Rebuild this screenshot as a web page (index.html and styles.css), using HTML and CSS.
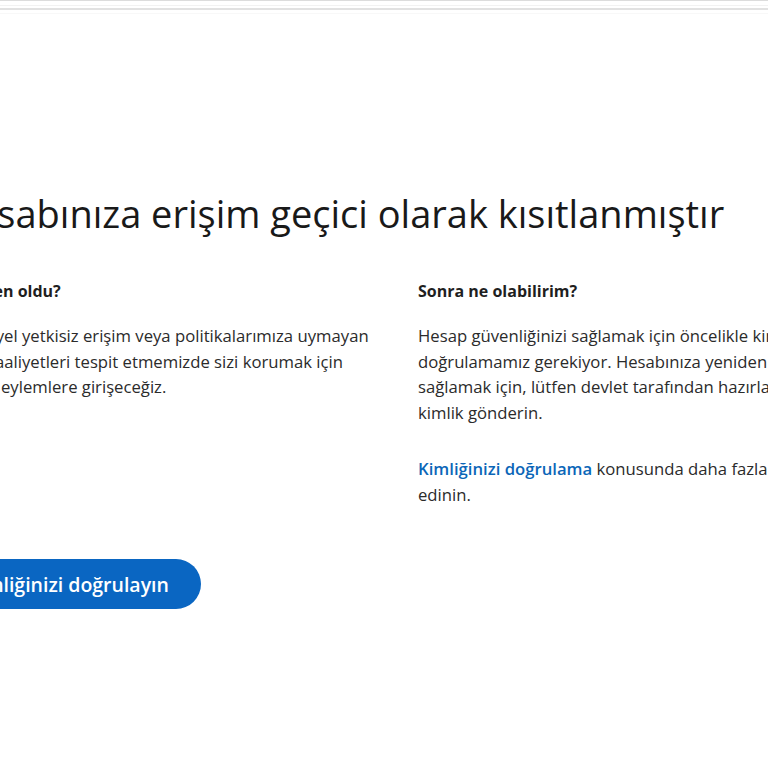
FILE: index.html
```html
<!DOCTYPE html>
<html lang="tr">
<head>
<meta charset="utf-8">
<title>Hesabınıza erişim geçici olarak kısıtlanmıştır</title>
<link rel="stylesheet" href="styles.css">
</head>
<body>
<div class="topbar">
  <div class="rule rule-a"></div>
  <div class="rule rule-b"></div>
  <div class="rule rule-c"></div>
  <div class="rule rule-d"></div>
</div>
<main class="page">
  <h1 class="title">Hesabınıza erişim geçici olarak kısıtlanmıştır</h1>
  <div class="cols">
    <section class="col">
      <h2 class="subhead">Bu neden oldu?</h2>
      <p class="text">Potansiyel yetkisiz erişim veya politikalarımıza uymayan<br>hesap faaliyetleri tespit etmemizde sizi korumak için<br>önleyici eylemlere girişeceğiz.</p>
    </section>
    <section class="col">
      <h2 class="subhead">Sonra ne olabilirim?</h2>
      <p class="text">Hesap güvenliğinizi sağlamak için öncelikle kimliğinizi<br>doğrulamamız gerekiyor. Hesabınıza yeniden erişim<br>sağlamak için, lütfen devlet tarafından hazırlanmış bir<br>kimlik gönderin.</p>
      <p class="text text-more"><a class="link" href="#">Kimliğinizi doğrulama</a> konusunda daha fazla bilgi<br>edinin.</p>
    </section>
  </div>
  <button class="btn" type="button">Kimliğinizi doğrulayın</button>
</main>
</body>
</html>
```

FILE: styles.css
```css
html, body {
  margin: 0;
  padding: 0;
  background: #ffffff;
  overflow: hidden;
}

body {
  font-family: "Open Sans", "Noto Sans", sans-serif;
  color: #1f1f1f;
}

.topbar {
  display: flex;
  flex-direction: column;
  height: 15px;
}

.rule {
  height: 1px;
  background: #dddddd;
}

.rule-a { background: #dcdcdc; }
.rule-b { margin-top: 4px; background: #f2f2f2; }
.rule-c { margin-top: 2px; height: 2px; background: #e1e1e1; }
.rule-d { margin-top: 3px; background: #f8f8f8; }

.page {
  margin-left: -62px;
  width: 960px;
}

.title {
  margin: 174px 0 0;
  padding-left: 10px;
  font-size: 38px;
  font-weight: 400;
  line-height: 48px;
  color: #191919;
  white-space: nowrap;
}

.cols {
  display: grid;
  grid-template-columns: 430px 460px;
  column-gap: 50px;
  margin-top: 42px;
}

.subhead {
  margin: 0;
  font-size: 16px;
  font-weight: 700;
  line-height: 24px;
  color: #1f1f1f;
}

.text {
  margin: 20px 0 0;
  font-size: 16.7px;
  line-height: 25.5px;
  color: #2b2b2b;
  white-space: nowrap;
}

.text-more {
  margin-top: 31px;
}

.link {
  color: #0b66b8;
  font-weight: 600;
  text-decoration: none;
}

.btn {
  display: block;
  margin: 52px 0 0 -3px;
  height: 50px;
  padding: 0 32px;
  border: none;
  border-radius: 25px;
  background: #0a66c2;
  color: #ffffff;
  font-family: "Open Sans", "Noto Sans", sans-serif;
  font-size: 19.5px;
  font-weight: 600;
  white-space: nowrap;
}
```
